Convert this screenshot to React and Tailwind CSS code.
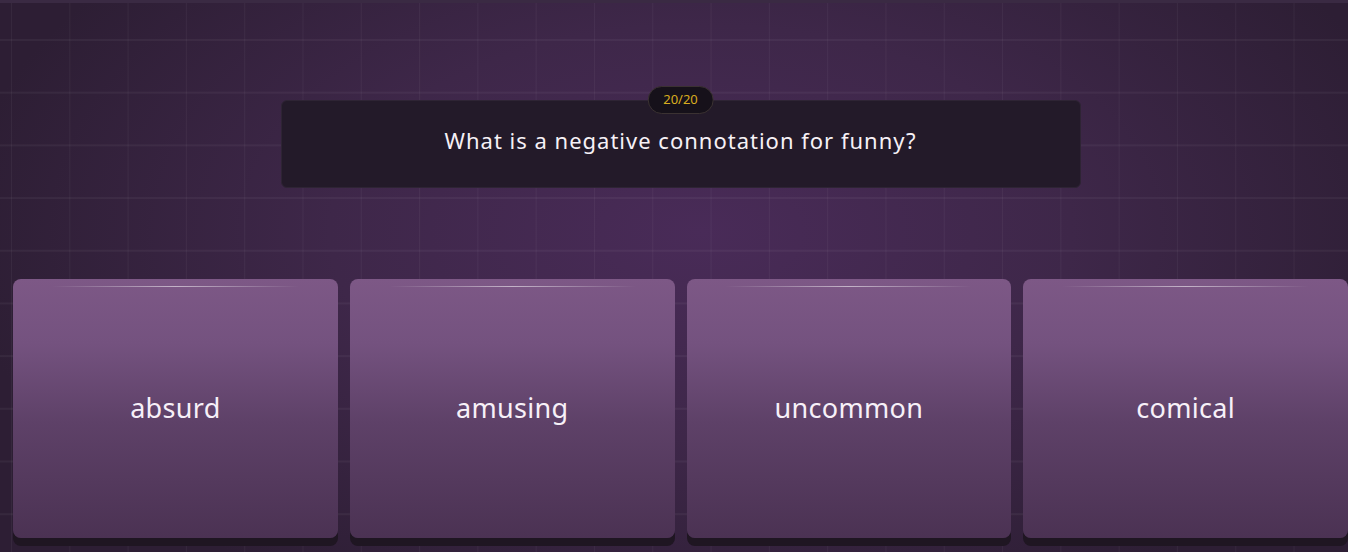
import React from "react";

const answers = ["absurd", "amusing", "uncommon", "comical"];

function AnswerCard({ label }) {
    return (
        <button className="relative h-[259px] rounded-[8px] bg-[linear-gradient(to_bottom,#7d5886_0%,#74527f_25%,#5e4168_55%,#4b3253_100%)] shadow-[0_8px_0_#1f1622] flex items-center justify-center">
            <span className="absolute top-[7px] left-[12%] right-[12%] h-px bg-[linear-gradient(to_right,transparent,rgba(255,255,255,0.55),transparent)]"></span>
            <span className="text-[27px] tracking-[0.3px] text-[#f7f0f8] font-['Noto_Sans',sans-serif]">{label}</span>
        </button>
    );
}

export default function App() {
    return (
        <div className="relative h-[552px] w-full overflow-hidden bg-[linear-gradient(to_right,rgba(255,255,255,0.045)_1px,transparent_1px),linear-gradient(to_bottom,rgba(255,255,255,0.045)_2px,transparent_2px),radial-gradient(ellipse_55%_75%_at_52%_42%,#492b58_0%,#3e2749_50%,#2d1e34_100%)] [background-size:58.3px_52.7px,58.3px_52.7px,100%_100%] [background-position:11px_0,0_39px,0_0] font-['Noto_Sans',sans-serif]">
            <div className="h-[3px] bg-[#3a2a43]"></div>
            <div className="flex flex-col pl-[13px]">
                <div className="relative mx-auto mt-[97px] w-[800px] h-[88px] rounded-[6px] bg-[#231a29] border border-[#2e2434] flex justify-center pt-[24px]">
                    <div className="absolute -top-[15px] left-1/2 -translate-x-1/2 h-[28px] px-[15px] rounded-full bg-[#16111a] border border-[#3b3232] flex items-center text-[13px] text-[#d9ad1f]">
                        20/20
                    </div>
                    <p className="text-[22px] leading-[30px] tracking-[1px] text-[#f6f1f6]">What is a negative connotation for funny?</p>
                </div>
                <div className="grid grid-cols-4 gap-[12px] mt-[91px]">
                    {answers.map((a) => (
                        <AnswerCard key={a} label={a} />
                    ))}
                </div>
            </div>
        </div>
    );
}
